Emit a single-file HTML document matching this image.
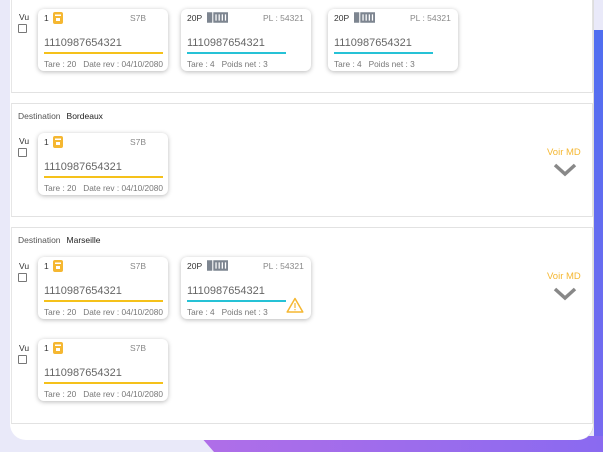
<!DOCTYPE html>
<html><head><meta charset="utf-8"><style>
*{box-sizing:border-box;margin:0;padding:0}
body{width:603px;height:452px;overflow:hidden;background:#e9e9f9;font-family:"Liberation Sans",sans-serif;position:relative}
.a{position:absolute}
.blue{left:594px;top:30px;width:9px;height:422px;background:linear-gradient(#4f6ef0,#7a6af0)}
.purp{left:200px;top:436px;width:403px;height:16px;background:linear-gradient(90deg,#b06ee8,#8a6af0);clip-path:polygon(0 0,100% 0,100% 100%,14px 100%)}
.panel{left:10px;top:-10px;width:584px;height:450px;background:#fff;border-radius:0 0 16px 16px;border-right:1px solid #ddd}
.sec{position:absolute;left:11px;width:582px;border:1px solid #e2e2e2;border-left:1px solid #e6e6e6;background:#fff}
.card{position:absolute;width:130px;height:62px;background:#fff;border-radius:6px;box-shadow:0 1px 5px rgba(0,0,0,.28)}
.t{position:absolute;font-size:8.5px;color:#333}
.g{color:#888}
.num{position:absolute;left:6px;top:28px;font-size:11px;color:#666}
.ln{position:absolute;left:6px;top:43px;height:2px}
.bt{position:absolute;left:6px;top:50px;font-size:8.3px;color:#777;white-space:nowrap}
.vu{position:absolute;font-size:8.5px;color:#333}
.cb{position:absolute;width:9px;height:9px;border:1px solid #777;border-radius:1px}
.dest{position:absolute;left:18px;font-size:8.5px;color:#555}
.dest b{font-weight:normal;color:#222;margin-left:6px}
.voir{position:absolute;left:547px;font-size:9.5px;color:#f5b731}
</style></head><body>
<div class="a blue"></div><div class="a purp"></div>
<div class="a panel"></div>
<div class="sec" style="top:-5px;height:98px"></div>
<div class="sec" style="top:103px;height:114px"></div>
<div class="sec" style="top:227px;height:197px"></div>

<div class="vu" style="left:19px;top:12px">Vu</div><div class="cb" style="left:18px;top:24px"></div>

<div class="card" style="left:38px;top:9px">
<div class="t" style="left:6px;top:4px">1</div>
<svg class="a" style="left:15px;top:3px" width="10" height="12" viewBox="0 0 10 12"><rect x="0" y="0" width="10" height="12" rx="2" fill="#f5b731"/><rect x="2" y="2.5" width="6" height="1.5" fill="#fff"/><rect x="3" y="6" width="4" height="3" fill="#fff"/></svg>
<div class="t g" style="left:92px;top:4px">S7B</div>
<div class="num">1110987654321</div><div class="ln" style="width:119px;background:#f5c11a"></div>
<div class="bt">Tare : 20 &nbsp; Date rev : 04/10/2080</div></div>

<div class="card" style="left:181px;top:9px">
<div class="t" style="left:6px;top:4px">20P</div>
<svg class="a" style="left:26px;top:3px" width="21" height="11" viewBox="0 0 20 10"><rect x="0" y="0" width="5" height="10" fill="#7d8590"/><rect x="6" y="0" width="14" height="10" fill="#7d8590"/><rect x="8" y="2" width="1.2" height="6" fill="#fff"/><rect x="11" y="2" width="1.2" height="6" fill="#fff"/><rect x="14" y="2" width="1.2" height="6" fill="#fff"/><rect x="17" y="2" width="1.2" height="6" fill="#fff"/></svg>
<div class="t g" style="left:82px;top:4px">PL : 54321</div>
<div class="num">1110987654321</div><div class="ln" style="width:99px;background:#26c2d6"></div>
<div class="bt">Tare : 4 &nbsp; Poids net : 3</div></div>

<div class="card" style="left:328px;top:9px">
<div class="t" style="left:6px;top:4px">20P</div>
<svg class="a" style="left:26px;top:3px" width="21" height="11" viewBox="0 0 20 10"><rect x="0" y="0" width="5" height="10" fill="#7d8590"/><rect x="6" y="0" width="14" height="10" fill="#7d8590"/><rect x="8" y="2" width="1.2" height="6" fill="#fff"/><rect x="11" y="2" width="1.2" height="6" fill="#fff"/><rect x="14" y="2" width="1.2" height="6" fill="#fff"/><rect x="17" y="2" width="1.2" height="6" fill="#fff"/></svg>
<div class="t g" style="left:82px;top:4px">PL : 54321</div>
<div class="num">1110987654321</div><div class="ln" style="width:99px;background:#26c2d6"></div>
<div class="bt">Tare : 4 &nbsp; Poids net : 3</div></div>

<div class="dest" style="top:111px">Destination<b>Bordeaux</b></div>
<div class="vu" style="left:19px;top:136px">Vu</div><div class="cb" style="left:18px;top:148px"></div>
<div class="card" style="left:38px;top:133px">
<div class="t" style="left:6px;top:4px">1</div>
<svg class="a" style="left:15px;top:3px" width="10" height="12" viewBox="0 0 10 12"><rect x="0" y="0" width="10" height="12" rx="2" fill="#f5b731"/><rect x="2" y="2.5" width="6" height="1.5" fill="#fff"/><rect x="3" y="6" width="4" height="3" fill="#fff"/></svg>
<div class="t g" style="left:92px;top:4px">S7B</div>
<div class="num">1110987654321</div><div class="ln" style="width:119px;background:#f5c11a"></div>
<div class="bt">Tare : 20 &nbsp; Date rev : 04/10/2080</div></div>
<div class="voir" style="top:147px">Voir MD</div>
<svg class="a" style="left:553px;top:163px" width="24" height="14" viewBox="0 0 24 14"><path d="M2 2 L12 11 L22 2" fill="none" stroke="#888" stroke-width="3.5"/></svg>

<div class="dest" style="top:235px">Destination<b>Marseille</b></div>
<div class="vu" style="left:19px;top:261px">Vu</div><div class="cb" style="left:18px;top:273px"></div>
<div class="card" style="left:38px;top:257px">
<div class="t" style="left:6px;top:4px">1</div>
<svg class="a" style="left:15px;top:3px" width="10" height="12" viewBox="0 0 10 12"><rect x="0" y="0" width="10" height="12" rx="2" fill="#f5b731"/><rect x="2" y="2.5" width="6" height="1.5" fill="#fff"/><rect x="3" y="6" width="4" height="3" fill="#fff"/></svg>
<div class="t g" style="left:92px;top:4px">S7B</div>
<div class="num">1110987654321</div><div class="ln" style="width:119px;background:#f5c11a"></div>
<div class="bt">Tare : 20 &nbsp; Date rev : 04/10/2080</div></div>
<div class="card" style="left:181px;top:257px">
<div class="t" style="left:6px;top:4px">20P</div>
<svg class="a" style="left:26px;top:3px" width="21" height="11" viewBox="0 0 20 10"><rect x="0" y="0" width="5" height="10" fill="#7d8590"/><rect x="6" y="0" width="14" height="10" fill="#7d8590"/><rect x="8" y="2" width="1.2" height="6" fill="#fff"/><rect x="11" y="2" width="1.2" height="6" fill="#fff"/><rect x="14" y="2" width="1.2" height="6" fill="#fff"/><rect x="17" y="2" width="1.2" height="6" fill="#fff"/></svg>
<div class="t g" style="left:82px;top:4px">PL : 54321</div>
<div class="num">1110987654321</div><div class="ln" style="width:99px;background:#26c2d6"></div>
<div class="bt">Tare : 4 &nbsp; Poids net : 3</div>
<svg class="a" style="left:105px;top:40px" width="18" height="16" viewBox="0 0 18 16"><path d="M9 1.5 L16.8 15 L1.2 15 Z" fill="none" stroke="#f5b731" stroke-width="1.5" stroke-linejoin="round"/><rect x="8.4" y="6" width="1.2" height="5" fill="#f5b731"/><rect x="8.4" y="12" width="1.2" height="1.3" fill="#f5b731"/></svg>
</div>
<div class="voir" style="top:271px">Voir MD</div>
<svg class="a" style="left:553px;top:287px" width="24" height="14" viewBox="0 0 24 14"><path d="M2 2 L12 11 L22 2" fill="none" stroke="#888" stroke-width="3.5"/></svg>

<div class="vu" style="left:19px;top:343px">Vu</div><div class="cb" style="left:18px;top:355px"></div>
<div class="card" style="left:38px;top:339px">
<div class="t" style="left:6px;top:4px">1</div>
<svg class="a" style="left:15px;top:3px" width="10" height="12" viewBox="0 0 10 12"><rect x="0" y="0" width="10" height="12" rx="2" fill="#f5b731"/><rect x="2" y="2.5" width="6" height="1.5" fill="#fff"/><rect x="3" y="6" width="4" height="3" fill="#fff"/></svg>
<div class="t g" style="left:92px;top:4px">S7B</div>
<div class="num">1110987654321</div><div class="ln" style="width:119px;background:#f5c11a"></div>
<div class="bt">Tare : 20 &nbsp; Date rev : 04/10/2080</div></div>
</body></html>
